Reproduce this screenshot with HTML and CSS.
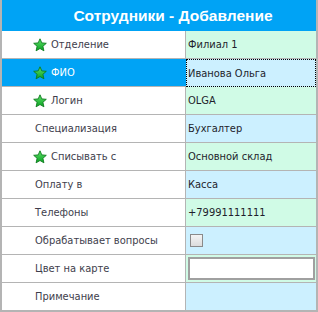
FILE: index.html
```html
<!DOCTYPE html>
<html>
<head>
<meta charset="utf-8">
<link rel="stylesheet" href="styles.css">
</head>
<body>
<svg width="0" height="0" class="defs">
  <defs>
    <linearGradient id="sg" x1="0" y1="0" x2="0" y2="1">
      <stop offset="0" stop-color="#5fe36a"/>
      <stop offset="1" stop-color="#0aa022"/>
    </linearGradient>
    <symbol id="star" viewBox="0 0 14 14">
      <path d="M7 0.8 L8.8 4.9 L13.3 5.3 L9.9 8.3 L10.9 12.8 L7 10.5 L3.1 12.8 L4.1 8.3 L0.7 5.3 L5.2 4.9 Z" fill="url(#sg)" stroke="#0b7a1c" stroke-width="0.9" stroke-linejoin="round"/>
    </symbol>
  </defs>
</svg>
<div class="form">
  <div class="header">Сотрудники - Добавление</div>
  <div class="row">
    <div class="label"><svg class="star"><use href="#star"/></svg>Отделение</div>
    <div class="value green">Филиал 1</div>
  </div>
  <div class="row selected">
    <div class="label"><svg class="star"><use href="#star"/></svg>ФИО</div>
    <div class="value blue focus">Иванова Ольга</div>
  </div>
  <div class="row">
    <div class="label"><svg class="star"><use href="#star"/></svg>Логин</div>
    <div class="value green">OLGA</div>
  </div>
  <div class="row">
    <div class="label plain">Специализация</div>
    <div class="value blue">Бухгалтер</div>
  </div>
  <div class="row">
    <div class="label"><svg class="star"><use href="#star"/></svg>Списывать с</div>
    <div class="value green">Основной склад</div>
  </div>
  <div class="row">
    <div class="label plain">Оплату в</div>
    <div class="value blue">Касса</div>
  </div>
  <div class="row">
    <div class="label plain">Телефоны</div>
    <div class="value green">+79991111111</div>
  </div>
  <div class="row">
    <div class="label plain">Обрабатывает вопросы</div>
    <div class="value blue"><span class="checkbox"></span></div>
  </div>
  <div class="row">
    <div class="label plain">Цвет на карте</div>
    <div class="value green"><span class="colorbox"></span></div>
  </div>
  <div class="row">
    <div class="label plain">Примечание</div>
    <div class="value blue"></div>
  </div>
</div>
</body>
</html>
```
FILE: styles.css
```css
html, body {
  margin: 0;
  padding: 0;
  background: #ffffff;
}
.defs {
  position: absolute;
  width: 0;
  height: 0;
}
.form {
  width: 318px;
  box-sizing: border-box;
  border-left: 2px solid #b4b4b4;
  border-right: 2px solid #b4b4b4;
  border-bottom: 1px solid #b4b4b4;
  font-family: "DejaVu Sans Condensed", "DejaVu Sans", sans-serif;
  font-stretch: condensed;
  font-size: 11px;
}
.header {
  height: 31px;
  background: #00a3f5;
  color: #ffffff;
  font-family: "Liberation Sans", Arial, sans-serif;
  font-stretch: normal;
  font-weight: bold;
  font-size: 15.5px;
  display: flex;
  align-items: center;
  justify-content: center;
  padding-left: 28px;
}
.row {
  display: grid;
  grid-template-columns: 184px 1fr;
  height: 28px;
  box-sizing: border-box;
  border-bottom: 1px solid #b4b4b4;
}
.label {
  display: flex;
  align-items: center;
  padding-left: 31px;
  color: #3e3e4c;
  border-right: 1px solid #b4b4b4;
  background: #ffffff;
}
.label.plain {
  padding-left: 33px;
}
.star {
  width: 14px;
  height: 14px;
  margin-right: 4px;
  flex: none;
}
.selected .label {
  background: #00a3f5;
  color: #ffffff;
  border-right-color: #00a3f5;
}
.value {
  display: flex;
  align-items: center;
  padding-left: 2px;
  color: #1e1e2c;
  box-sizing: border-box;
}
.green {
  background: #d0fbe6;
}
.blue {
  background: #ccf0ff;
}
.focus {
  border: 1px dotted #000000;
  margin-bottom: -1px;
  padding-left: 1px;
}
.checkbox {
  width: 13px;
  height: 13px;
  box-sizing: border-box;
  border: 1px solid #8a8a8a;
  background: linear-gradient(#f4f4f4, #dcdcdc);
  margin-left: 2px;
}
.colorbox {
  width: 127px;
  height: 23px;
  box-sizing: border-box;
  border: 2px solid #a0a0a0;
  background: #ffffff;
}
```
